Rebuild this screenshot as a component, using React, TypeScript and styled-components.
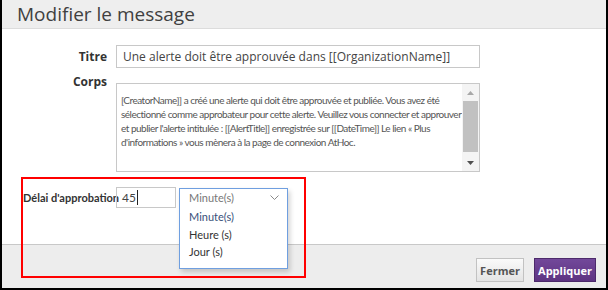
import React from 'react';
import styled, { createGlobalStyle } from 'styled-components';

const Global = createGlobalStyle`
  html, body { margin: 0; padding: 0; background: #fff; }
  *, *::before, *::after { box-sizing: border-box; }
`;

const Frame = styled.div`
  position: relative;
  width: 608px;
  height: 290px;
  border: 2px solid #000;
  border-top: none;
  display: flex;
  flex-direction: column;
  background: #fff;
  font-family: "Open Sans", sans-serif;
`;

const Header = styled.div`
  flex: none;
  height: 29px;
  background: #eeeeee;
  border-bottom: 1px solid #dcdcdc;
  padding-left: 15px;
  display: flex;
  align-items: center;
  font-size: 19px;
  color: #404040;
`;

const Body = styled.div`
  flex: 1;
  padding-top: 16px;
`;

const FormGrid = styled.div`
  display: grid;
  grid-template-columns: 105px 364px;
  column-gap: 9px;
  row-gap: 6px;
  align-items: center;
`;

const Label = styled.div<{ $top?: boolean }>`
  justify-self: end;
  align-self: ${p => (p.$top ? 'start' : 'center')};
  font-size: 12px;
  font-weight: 700;
  color: #333;
  line-height: 16px;
`;

const TextInput = styled.div`
  height: 23px;
  border: 1px solid #c8c8c8;
  padding-left: 6px;
  display: flex;
  align-items: center;
  font-size: 12px;
  color: #444;
  white-space: nowrap;
`;

const TextArea = styled.div`
  margin-top: 9px;
  height: 89px;
  border: 1px solid #c8c8c8;
  display: flex;
`;

const AreaText = styled.div`
  flex: 1;
  padding: 9px 0 0 4px;
  font-family: Lato, "Liberation Sans", sans-serif;
  font-size: 10px;
  letter-spacing: -0.5px;
  line-height: 14px;
  color: #555;
  overflow: hidden;
`;

const AreaLine = styled.div`
  white-space: nowrap;
`;

const Scrollbar = styled.div`
  flex: none;
  width: 17px;
  background: #f4f4f4;
  display: flex;
  flex-direction: column;
  align-items: stretch;
`;

const ScrollArrow = styled.div`
  height: 17px;
  display: flex;
  align-items: center;
  justify-content: center;
`;

const ScrollTrack = styled.div`
  flex: 1;
  padding: 0 1px;
  display: flex;
  flex-direction: column;
`;

const ScrollThumb = styled.div`
  height: 51px;
  background: #c1c1c1;
`;

const DelayRow = styled.div`
  margin-top: 15px;
  padding-left: 21px;
  display: flex;
  align-items: center;
  height: 21px;
`;

const DelayLabel = styled.div`
  font-family: Lato, sans-serif;
  font-size: 11px;
  font-weight: 700;
  color: #333;
  width: 93px;
  white-space: nowrap;
`;

const NumberInput = styled.div`
  width: 60px;
  height: 21px;
  border: 1px solid #c8c8c8;
  padding-left: 5px;
  display: flex;
  align-items: center;
  font-family: Lato, sans-serif;
  font-size: 12px;
  color: #444;
`;

const Caret = styled.span`
  display: inline-block;
  width: 1px;
  height: 15px;
  background: #222;
  margin-left: 1px;
`;

const SelectWrap = styled.div`
  position: relative;
  margin-left: 3px;
  width: 109px;
  height: 19px;
  align-self: flex-start;
  margin-top: 1px;
`;

const DropBox = styled.div`
  position: absolute;
  top: 0;
  left: 0;
  width: 109px;
  border: 1px solid #6f9fe0;
  background: #fff;
  box-shadow: 2px 3px 5px rgba(0, 0, 0, 0.18);
  font-family: Lato, sans-serif;
  z-index: 2;
`;

const SelectHead = styled.div`
  height: 17px;
  padding: 0 8px 0 9px;
  display: flex;
  align-items: center;
  justify-content: space-between;
  font-size: 11px;
  color: #777;
`;

const OptionList = styled.div`
  padding: 2px 0 7px;
`;

const Option = styled.div<{ $selected?: boolean }>`
  height: 17.5px;
  padding-left: 9px;
  display: flex;
  align-items: center;
  font-size: 11px;
  color: ${p => (p.$selected ? '#38507a' : '#333')};
`;

const Footer = styled.div`
  flex: none;
  height: 44px;
  background: #ededed;
  border-top: 1px solid #c8c8c8;
  padding: 13px 10px 0 0;
  display: flex;
  justify-content: flex-end;
  align-items: flex-start;
  gap: 10px;
`;

const Button = styled.div<{ $primary?: boolean }>`
  height: 24px;
  padding: 0 4px;
  display: flex;
  align-items: center;
  justify-content: center;
  font-size: 11px;
  font-weight: 700;
  border: 1px solid ${p => (p.$primary ? '#4d2a6b' : '#c2c2c2')};
  color: ${p => (p.$primary ? '#fff' : '#555')};
  background: ${p =>
    p.$primary
      ? 'linear-gradient(#72489a, #5e3482)'
      : 'linear-gradient(#fafafa, #e4e4e4)'};
  width: ${p => (p.$primary ? '62px' : '48px')};
`;

const Highlight = styled.div`
  position: absolute;
  left: 19px;
  top: 177px;
  width: 285px;
  height: 101px;
  border: 2px solid #ff0000;
  pointer-events: none;
  z-index: 3;
`;

const Chevron = () => (
  <svg width="9" height="5" viewBox="0 0 9 5">
    <path d="M0.5 0.5 L4.5 4.5 L8.5 0.5" fill="none" stroke="#8a8a8a" strokeWidth="1" />
  </svg>
);

const Tri = ({ up, color }: { up?: boolean; color: string }) => (
  <svg width="7" height="4" viewBox="0 0 7 4">
    <path d={up ? 'M0 4 L3.5 0 L7 4 Z' : 'M0 0 L3.5 4 L7 0 Z'} fill={color} />
  </svg>
);

export default function App() {
  return (
    <>
      <Global />
      <Frame>
        <Header>Modifier le message</Header>
        <Body>
          <FormGrid>
            <Label>Titre</Label>
            <TextInput>Une alerte doit être approuvée dans [[OrganizationName]]</TextInput>
            <Label $top>Corps</Label>
            <TextArea>
              <AreaText>
                <AreaLine>[CreatorName]] a créé une alerte qui doit être approuvée et publiée. Vous avez été</AreaLine>
                <AreaLine>sélectionné comme approbateur pour cette alerte. Veuillez vous connecter et approuver</AreaLine>
                <AreaLine>et publier l'alerte intitulée : [[AlertTitle]] enregistrée sur [[DateTime]] Le lien « Plus</AreaLine>
                <AreaLine>d'informations » vous mènera à la page de connexion AtHoc.</AreaLine>
              </AreaText>
              <Scrollbar>
                <ScrollArrow><Tri up color="#a8a8a8" /></ScrollArrow>
                <ScrollTrack>
                  <ScrollThumb />
                </ScrollTrack>
                <ScrollArrow><Tri color="#505050" /></ScrollArrow>
              </Scrollbar>
            </TextArea>
          </FormGrid>
          <DelayRow>
            <DelayLabel>Délai d'approbation</DelayLabel>
            <NumberInput>45<Caret /></NumberInput>
            <SelectWrap>
              <DropBox>
                <SelectHead>
                  <span>Minute(s)</span>
                  <Chevron />
                </SelectHead>
                <OptionList>
                  <Option $selected>Minute(s)</Option>
                  <Option>Heure (s)</Option>
                  <Option>Jour (s)</Option>
                </OptionList>
              </DropBox>
            </SelectWrap>
          </DelayRow>
        </Body>
        <Footer>
          <Button>Fermer</Button>
          <Button $primary>Appliquer</Button>
        </Footer>
        <Highlight />
      </Frame>
    </>
  );
}
